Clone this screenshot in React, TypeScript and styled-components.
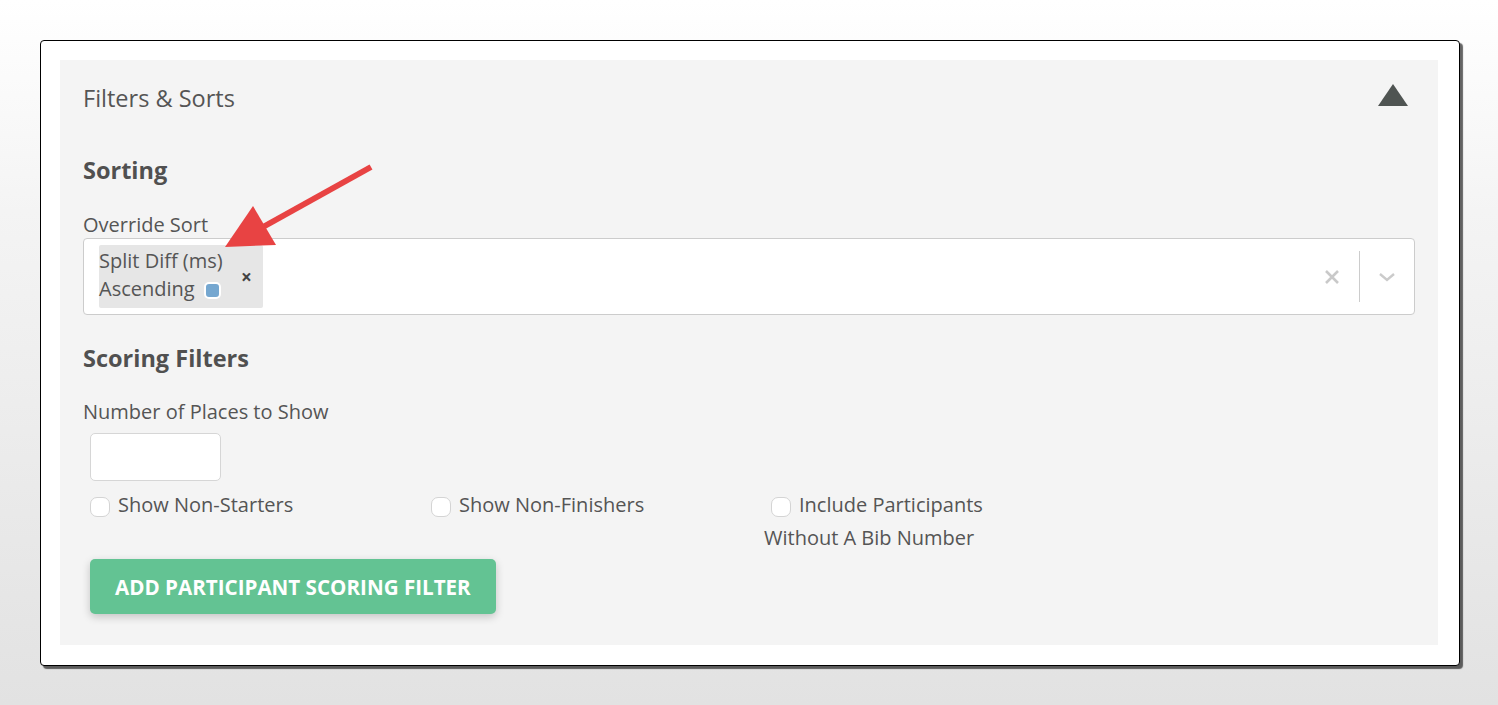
import React from "react";
import { createGlobalStyle, styled } from "styled-components";

const GlobalStyle = createGlobalStyle`
  html, body {
    margin: 0;
    padding: 0;
  }
  body {
    font-family: "Open Sans", "Noto Sans", sans-serif;
    background: linear-gradient(to bottom, #ffffff 0%, #f4f4f4 30%, #e2e2e2 100%);
    min-height: 705px;
    color: #555;
  }
`;

const Page = styled.div`
  padding: 40px 38px 0 40px;
  box-sizing: border-box;
  width: 1498px;
  height: 705px;
`;

const Card = styled.div`
  position: relative;
  background: #fff;
  border: 1px solid #000;
  border-radius: 4px;
  box-shadow: 3px 3px 1px rgba(0, 0, 0, 0.6);
  padding: 19px 21px 20px 19px;
  width: 1420px;
  box-sizing: border-box;
`;

const Panel = styled.section`
  background: #f4f4f4;
  padding: 0 23px 31px 23px;
`;

const PanelHeader = styled.div`
  display: flex;
  align-items: center;
  justify-content: space-between;
  height: 76px;
  padding-right: 7px;
`;

const PanelTitle = styled.h2`
  margin: 0;
  font-size: 23.5px;
  font-weight: 400;
  color: #555;
`;

const Caret = styled.div`
  width: 0;
  height: 0;
  margin-bottom: 6px;
  border-left: 15px solid transparent;
  border-right: 15px solid transparent;
  border-bottom: 22px solid #4f5452;
`;

const SectionTitle = styled.h3`
  margin: 0;
  font-size: 23.5px;
  font-weight: 700;
  color: #505050;
  line-height: 30px;
`;

const FieldLabel = styled.div`
  font-size: 20px;
  color: #555;
  line-height: 26px;
`;

const SelectBox = styled.div`
  display: flex;
  align-items: center;
  background: #fff;
  border: 1px solid #ccc;
  border-radius: 4px;
  height: 77px;
  box-sizing: border-box;
  padding: 0 0 0 15px;
`;

const Chip = styled.div`
  display: flex;
  align-items: center;
  background: #e6e6e6;
  border-radius: 2px;
  height: 63px;
  padding: 0 11px 0 0;
  box-sizing: border-box;
`;

const ChipText = styled.div`
  font-size: 20px;
  line-height: 28px;
  color: #555;
  width: 137px;
  margin-top: -4px;
`;

const SortDot = styled.span`
  display: inline-block;
  width: 17px;
  height: 17px;
  box-sizing: border-box;
  background: #75a7d0;
  border: 2px solid #fff;
  border-radius: 5px;
  vertical-align: -3px;
  margin-left: 9px;
`;

const ChipRemove = styled.span`
  font-size: 19px;
  font-weight: 700;
  color: #444;
  margin-left: 5px;
`;

const SelectSpacer = styled.div`
  flex: 1;
`;

const Indicator = styled.div`
  display: flex;
  align-items: center;
  justify-content: center;
  width: 54px;
  height: 100%;
`;

const Separator = styled.div`
  width: 1px;
  height: 51px;
  background: #ccc;
`;

const NumberInput = styled.input`
  display: block;
  width: 131px;
  height: 48px;
  box-sizing: border-box;
  border: 1px solid #d6d6d6;
  border-radius: 5px;
  background: #fff;
  margin: 8px 0 0 7px;
`;

const CheckGrid = styled.div`
  display: grid;
  grid-template-columns: 341px 340px 341px;
  margin-top: 7px;
`;

const CheckItem = styled.label`
  display: block;
  max-width: 230px;
  font-size: 20px;
  line-height: 33px;
  color: #555;
`;

const CheckBoxMark = styled.span`
  display: inline-block;
  width: 20px;
  height: 20px;
  box-sizing: border-box;
  border: 1px solid #d4d4d4;
  border-radius: 7px;
  background: #fff;
  vertical-align: -5px;
  margin: 0 8px 0 7px;
`;

const AddButton = styled.button`
  display: block;
  margin: 5px 0 0 7px;
  height: 55px;
  padding: 0 25px;
  border: none;
  border-radius: 5px;
  background: #63c393;
  color: #fff;
  font-family: "Open Sans", "Noto Sans", sans-serif;
  font-size: 20.6px;
  font-weight: 700;
  text-transform: uppercase;
  box-shadow: 0 3px 8px rgba(0, 0, 0, 0.2);
`;

const ArrowOverlay = styled.svg`
  position: absolute;
  left: 0;
  top: 0;
  pointer-events: none;
`;

const Section = styled.div<{ $top: number }>`
  margin-top: ${(p) => p.$top}px;
`;

const App: React.FC = () => {
  return (
    <>
      <GlobalStyle />
      <Page>
        <Card>
          <Panel>
            <PanelHeader>
              <PanelTitle>Filters &amp; Sorts</PanelTitle>
              <Caret />
            </PanelHeader>

            <Section $top={19}>
              <SectionTitle>Sorting</SectionTitle>
            </Section>
            <Section $top={27}>
              <FieldLabel>Override Sort</FieldLabel>
              <SelectBox>
                <Chip>
                  <ChipText>
                    Split Diff (ms)
                    <br />
                    Ascending<SortDot />
                  </ChipText>
                  <ChipRemove>×</ChipRemove>
                </Chip>
                <SelectSpacer />
                <Indicator>
                  <svg width="16" height="16" viewBox="0 0 16 16">
                    <path d="M2 2 L14 14 M14 2 L2 14" stroke="#c9c9c9" strokeWidth="2.6" />
                  </svg>
                </Indicator>
                <Separator />
                <Indicator>
                  <svg width="18" height="12" viewBox="0 0 18 12">
                    <path d="M2 3 L9 9 L16 3" stroke="#cbcbcb" strokeWidth="2.4" fill="none" />
                  </svg>
                </Indicator>
              </SelectBox>
            </Section>

            <Section $top={28}>
              <SectionTitle>Scoring Filters</SectionTitle>
            </Section>
            <Section $top={26}>
              <FieldLabel>Number of Places to Show</FieldLabel>
              <NumberInput type="text" />
            </Section>

            <CheckGrid>
              <CheckItem>
                <CheckBoxMark />
                Show Non-Starters
              </CheckItem>
              <CheckItem>
                <CheckBoxMark />
                Show Non-Finishers
              </CheckItem>
              <CheckItem>
                <CheckBoxMark />
                Include Participants Without A Bib Number
              </CheckItem>
            </CheckGrid>

            <AddButton>Add Participant Scoring Filter</AddButton>
          </Panel>

          <ArrowOverlay width="420" height="260">
            <line x1="330" y1="126" x2="222" y2="186" stroke="#e84343" strokeWidth="6" strokeLinecap="butt" />
            <polygon points="184,206 212,165 235,204" fill="#e84343" />
          </ArrowOverlay>
        </Card>
      </Page>
    </>
  );
};

export default App;
